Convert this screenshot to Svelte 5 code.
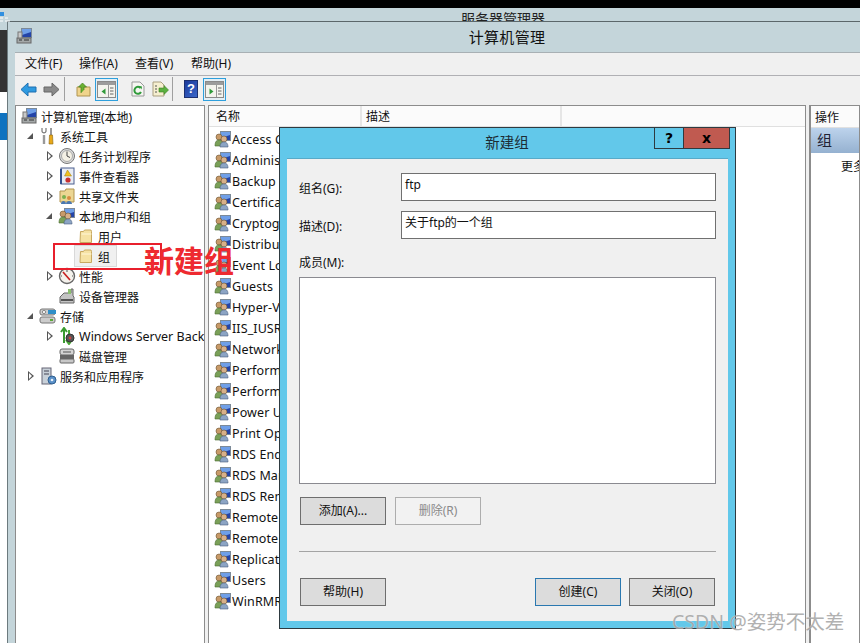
<script>
  const tree = [
    { d: 0, t: '计算机管理(本地)', i: 'computer', a: '' },
    { d: 1, t: '系统工具', i: 'tools', a: 'open' },
    { d: 2, t: '任务计划程序', i: 'clock', a: 'closed' },
    { d: 2, t: '事件查看器', i: 'event', a: 'closed' },
    { d: 2, t: '共享文件夹', i: 'share', a: 'closed' },
    { d: 2, t: '本地用户和组', i: 'group', a: 'open' },
    { d: 3, t: '用户', i: 'folder', a: '' },
    { d: 3, t: '组', i: 'folder', a: '', sel: true },
    { d: 2, t: '性能', i: 'perf', a: 'closed' },
    { d: 2, t: '设备管理器', i: 'device', a: '' },
    { d: 1, t: '存储', i: 'storage', a: 'open' },
    { d: 2, t: 'Windows Server Backup', i: 'backup', a: 'closed', latin: true },
    { d: 2, t: '磁盘管理', i: 'disk', a: '' },
    { d: 1, t: '服务和应用程序', i: 'service', a: 'closed' }
  ];
  const groups = ['Access Control Assistance','Administrators','Backup Operators','Certificate Service','Cryptographic Operators','Distributed COM Users','Event Log Readers','Guests','Hyper-V Administrators','IIS_IUSRS','Network Configuration','Performance Log Users','Performance Monitor','Power Users','Print Operators','RDS Endpoint Servers','RDS Management','RDS Remote Access','Remote Desktop Users','Remote Management','Replicator','Users','WinRMRemoteWMI'];
</script>

{#snippet monitor()}
  <rect x="6.500" y="1.500" width="10" height="9" fill="#2444a8" stroke="#7c8a98"/>
  <path d="M7 2h9v3L7 8z" fill="#6f9fe8"/>
{/snippet}

{#snippet icon(name)}
  <svg class="ico" viewBox="0 0 18 18" aria-hidden="true">
    {#if name === 'computer'}
      {@render monitor()}
      <rect x="2" y="11" width="14" height="5" fill="#a4a8a8" stroke="#666"/>
      <path d="M4 13h3M9 13h5" stroke="#333"/>
      <rect x="3" y="5" width="4" height="6" fill="#c8c8c8" stroke="#777"/>
    {:else if name === 'group'}
      {@render monitor()}
      <circle cx="5" cy="7" r="3" fill="#c89a68" stroke="#6a5030" stroke-width=".6"/>
      <path d="M1 16c0-5 2-6 4-6s4 1 4 6z" fill="#7aa058" stroke="#4a6c30" stroke-width=".6"/>
      <circle cx="10" cy="9" r="3" fill="#d8b088" stroke="#6a5030" stroke-width=".6"/>
      <path d="M6 17c0-4 2-5 4-5s4 1 4 5z" fill="#8ca4c4" stroke="#4a5f80" stroke-width=".6"/>
    {:else if name === 'folder'}
      <path d="M3.500 4.500h3l1-1.500h6.500l.5 1.500v11h-11.500z" fill="#f6e2a4" stroke="#c8a860"/>
      <path d="M4.500 7h10" stroke="#fff6d8"/>
    {:else if name === 'tools'}
      <path d="M5 8v9" stroke="#999" stroke-width="2.400"/>
      <path d="M3 1v3c0 2.500 4 2.500 4 0V1" stroke="#777" stroke-width="1.200" fill="none"/>
      <rect x="11" y="1" width="2" height="7" fill="#999"/>
      <path d="M10.500 8h3l.5 9h-4z" fill="#e8a818" stroke="#8a6410" stroke-width=".6"/>
    {:else if name === 'clock'}
      <circle cx="9" cy="9" r="7.500" fill="#ddd" stroke="#777"/>
      <circle cx="9" cy="9" r="5.500" fill="#f4f0e4" stroke="#aaa"/>
      <path d="M9 4.500V9l3 1.500" stroke="#444" fill="none"/>
    {:else if name === 'event'}
      <rect x="3" y="1" width="13" height="16" fill="#e8ecf4" stroke="#4a5f90"/>
      <path d="M3 2v15" stroke="#33508c" stroke-width="2"/>
      <path d="M9.500 3l4 6h-7z" fill="#f0c020" stroke="#9a7a10" stroke-width=".5"/>
      <circle cx="10" cy="13" r="2.600" fill="#c83030"/>
    {:else if name === 'share'}
      <path d="M2 4h5l1-2h8v13H2z" fill="#ecd692" stroke="#b09450"/>
      <circle cx="6" cy="10" r="2" fill="#7ab050"/>
      <circle cx="11" cy="11" r="2" fill="#d88c40"/>
      <path d="M3 17c0-4 5-4 5 0zM8 17c0-4 6-4 6 0z" fill="#4a78b0"/>
    {:else if name === 'perf'}
      <circle cx="9" cy="9" r="7.500" fill="#f4f2ec" stroke="#666" stroke-width="1.400"/>
      <path d="M5 5l7 8" stroke="#c82020" stroke-width="1.600"/>
      <path d="M9 3v2M14 9h1M3 9h1" stroke="#555"/>
    {:else if name === 'device'}
      <path d="M3 9l3-3h7v-4h2v7l1 1v6H2v-6z" fill="#c4c4c4" stroke="#666"/>
      <rect x="3" y="12" width="12" height="2" fill="#555"/>
      <rect x="10" y="2" width="3" height="5" fill="#8cc070"/>
    {:else if name === 'storage'}
      <rect x="1" y="2" width="15" height="6" rx="2" fill="#ccc" stroke="#777"/>
      <rect x="1" y="10" width="15" height="6" rx="2" fill="#ccc" stroke="#777"/>
      <rect x="9" y="3" width="8" height="4" fill="#2f8fc8"/>
      <rect x="11" y="12" width="3" height="2" fill="#5aa838"/>
      <circle cx="5" cy="5" r="1.600" fill="#fff" stroke="#888"/>
    {:else if name === 'backup'}
      <path d="M6 1v15M3 5l3-4 3 4" stroke="#3a9a30" stroke-width="2" fill="none"/>
      <path d="M11 17V3M8 13l3 4 3-4" stroke="#4aa838" stroke-width="2" fill="none"/>
      <circle cx="12" cy="11" r="4" fill="#555" stroke="#333"/>
      <circle cx="12" cy="11" r="1.400" fill="#c44"/>
    {:else if name === 'disk'}
      <rect x="2" y="2" width="14" height="6" rx="2" fill="#d4d4d4" stroke="#666"/>
      <rect x="2" y="8" width="14" height="4" fill="#666"/>
      <rect x="2" y="12" width="14" height="4" rx="1" fill="#c8c8c8" stroke="#666"/>
      <path d="M5 5h8" stroke="#555"/>
    {:else if name === 'service'}
      <rect x="3" y="1" width="9" height="16" fill="#c8d0d8" stroke="#667"/>
      <path d="M5 4h5M5 7h5" stroke="#445"/>
      <circle cx="13" cy="13" r="4" fill="#5a90c8" stroke="#2f5f90"/>
      <circle cx="13" cy="13" r="1.300" fill="#e8f0f8"/>
    {/if}
  </svg>
{/snippet}

{#snippet panelToggle(dir)}
  <span class="toggled">
    <svg viewBox="0 0 19 19" width="19" height="19" aria-hidden="true">
      <rect x=".5" y="1.500" width="18" height="16" fill="#f4f4ee" stroke="#8a8a8a"/>
      <path d="M1 2h17v3H1z" fill="#9c9c9c"/>
      <path d="M11.500 5v12" stroke="#999"/>
      <path d="M13 8h3.500M13 11h3.500M13 14h3.500" stroke="#666"/>
      {#if dir === 'left'}
        <path d="M8.500 8.500v6l-4-3z" fill="#2f9a3a"/>
      {:else}
        <path d="M4.500 8.500v6l4-3z" fill="#2f9a3a"/>
      {/if}
    </svg>
  </span>
{/snippet}

<div class="screen">
  <div class="topblack"></div>
  <div class="outer-title"><span>服务器管理器</span></div>
  <div class="body">
    <div class="strip">
      <div class="strip-a"></div>
      <div class="strip-b"></div>
      <div class="strip-c"></div>
      <div class="strip-d"></div>
    </div>
    <div class="window">
      <div class="titlebar">
        <span class="titleicon">{@render icon('computer')}</span>
        <span class="title">计算机管理</span>
      </div>
      <div class="inner">
        <nav class="menubar">
          <span>文件(F)</span><span>操作(A)</span><span>查看(V)</span><span>帮助(H)</span>
        </nav>
        <div class="toolbar">
          <svg class="tb back" viewBox="0 0 17 15" aria-hidden="true"><path d="M1 7.500L8 1v4h8v5H8v4z" fill="#2f9ae0" stroke="#1f6fb0"/></svg>
          <svg class="tb fwd" viewBox="0 0 17 15" aria-hidden="true"><path d="M16 7.500L9 1v4H1v5h8v4z" fill="#8a8a8a" stroke="#666"/></svg>
          <i class="sep s1"></i>
          <svg class="tb up" viewBox="0 0 15 15" aria-hidden="true"><path d="M1 5h13v9H1z" fill="#f0d48c" stroke="#b09450"/><path d="M5 11V5H2.500l4-4L10.500 5H8v3" fill="#6ab030" stroke="#3f8020" stroke-width=".7"/></svg>
          <span class="t1">{@render panelToggle('left')}</span>
          <svg class="tb refresh" viewBox="0 0 14 16" aria-hidden="true"><path d="M1 1h8l4 4v10H1z" fill="#f6f6f2" stroke="#999"/><path d="M10 11a3.500 3.500 0 1 1-.5-4" fill="none" stroke="#2f9a3a" stroke-width="2"/><path d="M8 5l3 .5-.5 3z" fill="#2f9a3a"/></svg>
          <svg class="tb export" viewBox="0 0 17 16" aria-hidden="true"><path d="M1 1h8l3 3v11H1z" fill="#f6efd0" stroke="#aaa080"/><path d="M3 5h2M3 8h2M3 11h2" stroke="#555"/><path d="M7 7h5V4.500L16.500 9 12 13.500V11H7z" fill="#5ab040" stroke="#3f8020" stroke-width=".6"/></svg>
          <i class="sep s2"></i>
          <span class="helpbook">?</span>
          <span class="t2">{@render panelToggle('right')}</span>
        </div>
        <div class="panes">
          <aside class="tree">
            {#each tree as r}
              <div class="row d{r.d}">
                {#if r.d > 0}
                  <span class="arrow {r.a}"></span>
                {/if}
                <span class="node" class:sel={r.sel}>
                  {@render icon(r.i)}
                  <span class="label" class:latin={r.latin}>{r.t}</span>
                </span>
              </div>
            {/each}
          </aside>
          <section class="list">
            <div class="lhead">
              <span class="c1">名称</span>
              <span class="c2">描述</span>
            </div>
            <div class="lrows">
              {#each groups as g}
                <div class="lrow">{@render icon('group')}<span>{g}</span></div>
              {/each}
            </div>
          </section>
          <aside class="actions">
            <div class="ahead">操作</div>
            <div class="agroup">组</div>
            <div class="amore">更多操作</div>
          </aside>
        </div>
      </div>
    </div>
  </div>

  <svg class="cornerglyph" viewBox="0 0 11 12" aria-hidden="true">
    <path d="M0 1h4v4H0z" fill="#2f8fe0"/>
    <path d="M0 7h3M5 7h3M0 10h3M5 10h5" stroke="#fff"/>
  </svg>
  <div class="redbox"></div>
  <div class="note">新建组</div>

  <div class="dialog">
    <div class="dtitle">
      <span class="dname">新建组</span>
      <div class="dbtns"><span class="dq">?</span><span class="dx">x</span></div>
    </div>
    <div class="client">
      <div class="field"><span class="flabel">组名(G):</span><div class="input">ftp</div></div>
      <div class="field f2"><span class="flabel">描述(D):</span><div class="input">关于ftp的一个组</div></div>
      <div class="mlabel">成员(M):</div>
      <div class="members"></div>
      <div class="brow"><button>添加(A)...</button><button class="off">删除(R)</button></div>
      <hr />
      <div class="brow end">
        <button>帮助(H)</button>
        <span class="grow"></span>
        <button class="def">创建(C)</button>
        <button>关闭(O)</button>
      </div>
    </div>
  </div>

  <div class="mark">CSDN @姿势不太差</div>
</div>

<style>
  :global(body) { margin: 0; }
  .screen {
    position: relative; width: 860px; height: 643px; overflow: hidden;
    display: flex; flex-direction: column;
    background: #c4d5da; color: #111;
    font-family: "Noto Sans", "Noto Sans CJK SC", sans-serif; font-size: 12px;
  }
  .topblack { height: 8px; background: #000; flex: none; }
  .outer-title { height: 13px; flex: none; overflow: hidden; text-align: center; padding-left: 146px; font-size: 14px; line-height: 16px; padding-top: 3px; box-sizing: border-box; color: #222; }
  .body { flex: 1; display: flex; min-height: 0; }
  .strip { width: 7px; flex: none; display: flex; flex-direction: column; background: #fff; }
  .strip-a { height: 9px; background: #c4d5da; }
  .strip-b { height: 62px; background: #333; }
  .strip-c { height: 21px; background: #fff; }
  .strip-d { height: 27px; background: #0f73c0; }
  .cornerglyph { position: absolute; left: 0; top: 11px; width: 11px; height: 12px; }
  .window { flex: 1; min-width: 0; border-top: 1px solid #5c676a; display: flex; flex-direction: column; background: #c4d5da; border-left: 1px solid #6c7a7e; }
  .titlebar { height: 30px; flex: none; position: relative; display: flex; align-items: center; justify-content: center; padding: 0 0 2px 146px; box-sizing: border-box; }
  .titleicon { position: absolute; left: 7px; top: 5px; }
  .title { font-size: 15px; letter-spacing: .3px; }
  .inner { flex: 1; min-height: 0; margin-left: 7px; background: #f0f0f0; border-top: 1px solid #a8b0b4; display: flex; flex-direction: column; }
  .menubar { height: 23px; box-sizing: border-box; flex: none; display: flex; align-items: center; border-bottom: 1px solid #b0b0b4; padding: 0 0 3px 10px; }
  .menubar span { width: 56px; }
  .menubar span:nth-child(1) { width: 54px; }
  .toolbar { height: 28px; box-sizing: border-box; flex: none; display: flex; align-items: center; position: relative; padding: 0 0 2px 5px; }
  .tb { display: block; flex: none; }
  .back, .fwd { width: 17px; height: 15px; }
  .fwd { margin-left: 6px; }
  .sep { width: 1px; height: 24px; background: #a0a0a0; flex: none; }
  .s1 { margin-left: 4px; }
  .up { width: 15px; height: 15px; margin-left: 11px; }
  .t1 { margin-left: 4px; }
  .toggled { display: flex; width: 23px; height: 23px; box-sizing: border-box; border: 1px solid #2e9fdc; background: #e4eef4; align-items: center; justify-content: center; }
  .refresh { width: 14px; height: 16px; margin-left: 13px; }
  .export { width: 17px; height: 16px; margin-left: 7px; }
  .s2 { margin-left: 3px; }
  .helpbook { box-sizing: border-box; width: 14px; height: 18px; margin-left: 11px; background: linear-gradient(135deg, #1c3a9c, #3a66c8); color: #fff; font: bold 13px/16px "Liberation Sans", sans-serif; text-align: center; border: 1px solid #1c3070; }
  .t2 { margin-left: 5px; }
  .panes { flex: 1; min-height: 0; display: flex; padding-top: 1px; }
  .tree { width: 188px; flex: none; background: #fff; border: 1px solid #8c8c8c; border-bottom: 0; overflow: hidden; }
  .row { height: 20px; display: flex; align-items: center; white-space: nowrap; }
  .d0 { padding-left: 4px; }
  .d1 { padding-left: 13px; }
  .d2 { padding-left: 32px; }
  .d3 { padding-left: 51px; }
  .arrow { width: 10px; flex: none; display: block; height: 10px; position: relative; }
  .arrow.closed::before { content: ""; position: absolute; left: -1px; top: 0; border-left: 6px solid #555; border-top: 5px solid transparent; border-bottom: 5px solid transparent; }
  .arrow.closed::after { content: ""; position: absolute; left: 0; top: 1.500px; border-left: 3.500px solid #fff; border-top: 3.500px solid transparent; border-bottom: 3.500px solid transparent; }
  .arrow.open::before { content: ""; position: absolute; left: -2px; top: 2px; border-right: 6px solid #555; border-top: 6px solid transparent; }
  .node { display: inline-flex; align-items: center; gap: 3px; height: 20px; box-sizing: border-box; }
  .node.sel { background: #f0f0f0; outline: 1px solid #d9d9d9; padding-right: 6px; margin-left: -2px; padding-left: 2px; }
  .label { padding-top: 1px; }
  .latin { font-size: 12.5px; }
  .ico { width: 18px; height: 18px; display: block; flex: none; }
  .list { width: 598px; flex: none; margin-left: 3px; background: #fff; border: 1px solid #8c8c8c; border-bottom: 0; box-sizing: border-box; overflow: hidden; }
  .lhead { height: 21px; display: flex; align-items: center; background: #fbfbfb; border-bottom: 1px solid #e0e0e0; padding-left: 3px; box-sizing: border-box; }
  .c1 { width: 150px; box-sizing: border-box; padding: 2px 0 0 4px; border-right: 2px solid #e6e6e6; line-height: 18px; }
  .c2 { width: 200px; box-sizing: border-box; padding: 2px 0 0 4px; border-right: 2px solid #e6e6e6; line-height: 18px; }
  .lrows { padding-top: 1px; }
  .lrow { height: 21px; display: flex; align-items: center; padding-left: 5px; white-space: nowrap; font-size: 12.5px; }
  .lrow span { letter-spacing: .1px; padding-top: 1px; }
  .actions { flex: 1; margin-left: 3px; background: #fff; border: 1px solid #8c8c8c; border-left-width: 2px; border-bottom: 0; overflow: hidden; white-space: nowrap; }
  .ahead { height: 21px; line-height: 23px; padding-left: 4px; background: #fbfbfb; border-bottom: 1px solid #e0e0e0; }
  .agroup { height: 25px; line-height: 25px; padding-left: 6px; font-size: 15px; background: linear-gradient(#bdd3ec, #95b1d0); color: #223; }
  .amore { padding: 4px 0 0 30px; }
  .redbox { position: absolute; left: 53px; top: 243px; width: 109px; height: 27px; box-sizing: border-box; border: 2px solid #e81f2c; }
  .note { position: absolute; left: 144px; top: 239px; font-size: 30px; line-height: 40px; font-weight: 700; color: #ee2a30; font-family: "Noto Sans CJK SC", sans-serif; white-space: nowrap; }
  .dialog { position: absolute; left: 279px; top: 127px; width: 457px; height: 502px; box-sizing: border-box; background: #62c8ea; border: 1px solid #2e3a40; display: flex; flex-direction: column; }
  .dtitle { height: 30px; flex: none; position: relative; text-align: center; line-height: 28px; font-size: 14.5px; color: #1c2c34; padding-right: 1px; }
  .dbtns { position: absolute; right: 5px; top: -1px; display: flex; height: 22px; }
  .dq, .dx { display: flex; align-items: center; justify-content: center; box-sizing: border-box; height: 22px; border: 1px solid #2e3a40; font: bold 14px "DejaVu Sans", sans-serif; color: #000; }
  .dq { width: 29px; background: #62c8ea; border-right: 0; }
  .dx { width: 47px; background: #c05a50; }
  .client { flex: 1; margin: 0 7px 7px; background: #f0f0f0; border-top: 1px solid #58aac8; padding: 14px 12px 0 12px; display: flex; flex-direction: column; min-height: 0; }
  .field { display: flex; align-items: center; }
  .f2 { margin-top: 10px; }
  .flabel { width: 102px; flex: none; padding-top: 2px; }
  .input { flex: 1; height: 28px; box-sizing: border-box; background: #fff; border: 1px solid #707070; padding: 0 3px; line-height: 21px; }
  .mlabel { margin-top: 14px; height: 24px; line-height: 20px; }
  .members { height: 207px; flex: none; background: #fff; border: 1px solid #8a8a90; box-sizing: border-box; }
  .brow { display: flex; gap: 9px; margin-top: 13px; padding-left: 1px; }
  button { width: 86px; height: 28px; box-sizing: border-box; background: #dcdcdc; border: 1px solid #6e6e6e; font: inherit; color: #111; padding: 0 0 2px; flex: none; }
  button.off { background: #f2f2f2; border-color: #adadad; color: #8a8a8a; }
  button.def { border-color: #2a78b0; }
  hr { margin: 26px 0 0; border: 0; height: 1px; background: #a4a4a4; flex: none; }
  .end { margin-top: 26px; gap: 8px; padding-right: 1px; }
  .grow { flex: 1; }
  .mark { position: absolute; left: 672px; top: 610px; font-size: 19.500px; line-height: 24px; color: #a4a4a4; opacity: .85; white-space: nowrap; text-shadow: 0 0 1px #fff; }
</style>
